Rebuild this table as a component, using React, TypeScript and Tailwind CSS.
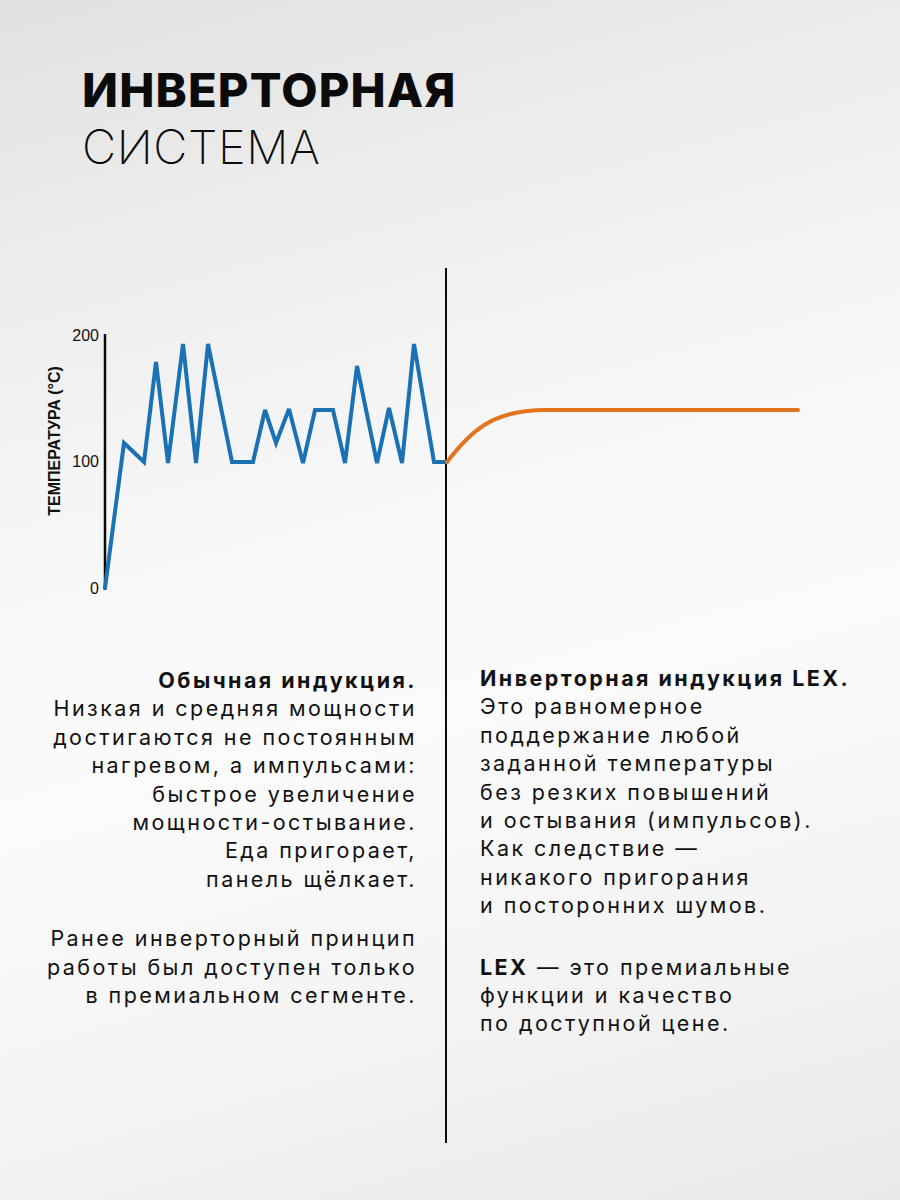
import React from "react";

const bluePts: [number, number][] = [
  [105, 588], [124, 443], [144, 462], [156, 362], [168, 463], [183, 344], [196, 463],
  [208, 344], [232, 462], [253, 462], [265, 410], [276, 443], [289, 409], [303, 463],
  [315, 410], [333, 410], [345, 463], [357, 366], [377, 463], [389, 408], [402, 463],
  [414, 344], [434, 462], [447, 462],
];

function Chart() {
  const d = bluePts.map((p, i) => `${i === 0 ? "M" : "L"}${p[0]} ${p[1]}`).join(" ");
  return (
    <svg width="900" height="465" viewBox="0 175 900 465" className="block">
      <line x1="446" y1="268" x2="446" y2="640" stroke="#0a0a0a" strokeWidth="2" />
      <line x1="105" y1="334" x2="105" y2="590" stroke="#0a0a0a" strokeWidth="2.5" />
      <path d={d} fill="none" stroke="#1a72b4" strokeWidth="4" strokeLinejoin="miter" strokeMiterlimit="3" strokeLinecap="round" />
      <path d="M447 462 C 470 432, 492 410, 545 410 L 798 410" fill="none" stroke="#e3731c" strokeWidth="4" strokeLinecap="round" />
      <g fontFamily="'Liberation Sans', Arial, sans-serif" fontSize="16" fill="#111" textAnchor="end">
        <text x="99" y="341">200</text>
        <text x="99" y="467">100</text>
        <text x="99" y="594">0</text>
      </g>
      <text
        transform="translate(60,441) rotate(-90)"
        textAnchor="middle"
        fontFamily="'Liberation Sans', Arial, sans-serif"
        fontSize="16"
        fontWeight="700"
        fill="#111"
      >
        ТЕМПЕРАТУРА (°C)
      </text>
    </svg>
  );
}

export default function App() {
  return (
    <div
      className="w-[900px] h-[1200px] overflow-hidden text-[#111]"
      style={{
        background:
          "linear-gradient(165deg, #e1e1e1 0%, #ececec 18%, #f7f7f7 40%, #fbfbfb 58%, #f3f3f3 80%, #e9e9e9 100%)",
      }}
    >
      <div className="pt-[61px] pl-[82px] font-['Inter',sans-serif] text-[47px] leading-[57px] text-[#0b0b0b]">
        <div className="font-extrabold tracking-[1.2px]">ИНВЕРТОРНАЯ</div>
        <div className="font-extralight tracking-[0.6px]">СИСТЕМА</div>
      </div>
      <Chart />
      <div className="grid grid-cols-[445px_1fr] h-[503px] font-['Inter',sans-serif] text-[21.5px] leading-[28.4px] tracking-[2.45px]">
        <div className="pt-[26px] pr-[28px] text-right">
          <div className="font-bold">Обычная индукция.</div>
          <div>
            Низкая и средняя мощности<br />
            достигаются не постоянным<br />
            нагревом, а импульсами:<br />
            быстрое увеличение<br />
            мощности-остывание.<br />
            Еда пригорает,<br />
            панель щёлкает.
          </div>
          <div className="mt-[31px]">
            Ранее инверторный принцип<br />
            работы был доступен только<br />
            в премиальном сегменте.
          </div>
        </div>
        <div className="border-l-2 border-[#0a0a0a] pt-[24px] pl-[33px]">
          <div className="font-bold">Инверторная индукция LEX.</div>
          <div>
            Это равномерное<br />
            поддержание любой<br />
            заданной температуры<br />
            без резких повышений<br />
            и остывания (импульсов).<br />
            Как следствие —<br />
            никакого пригорания<br />
            и посторонних шумов.
          </div>
          <div className="mt-[33px]">
            <span className="font-bold">LEX</span> — это премиальные<br />
            функции и качество<br />
            по доступной цене.
          </div>
        </div>
      </div>
    </div>
  );
}
